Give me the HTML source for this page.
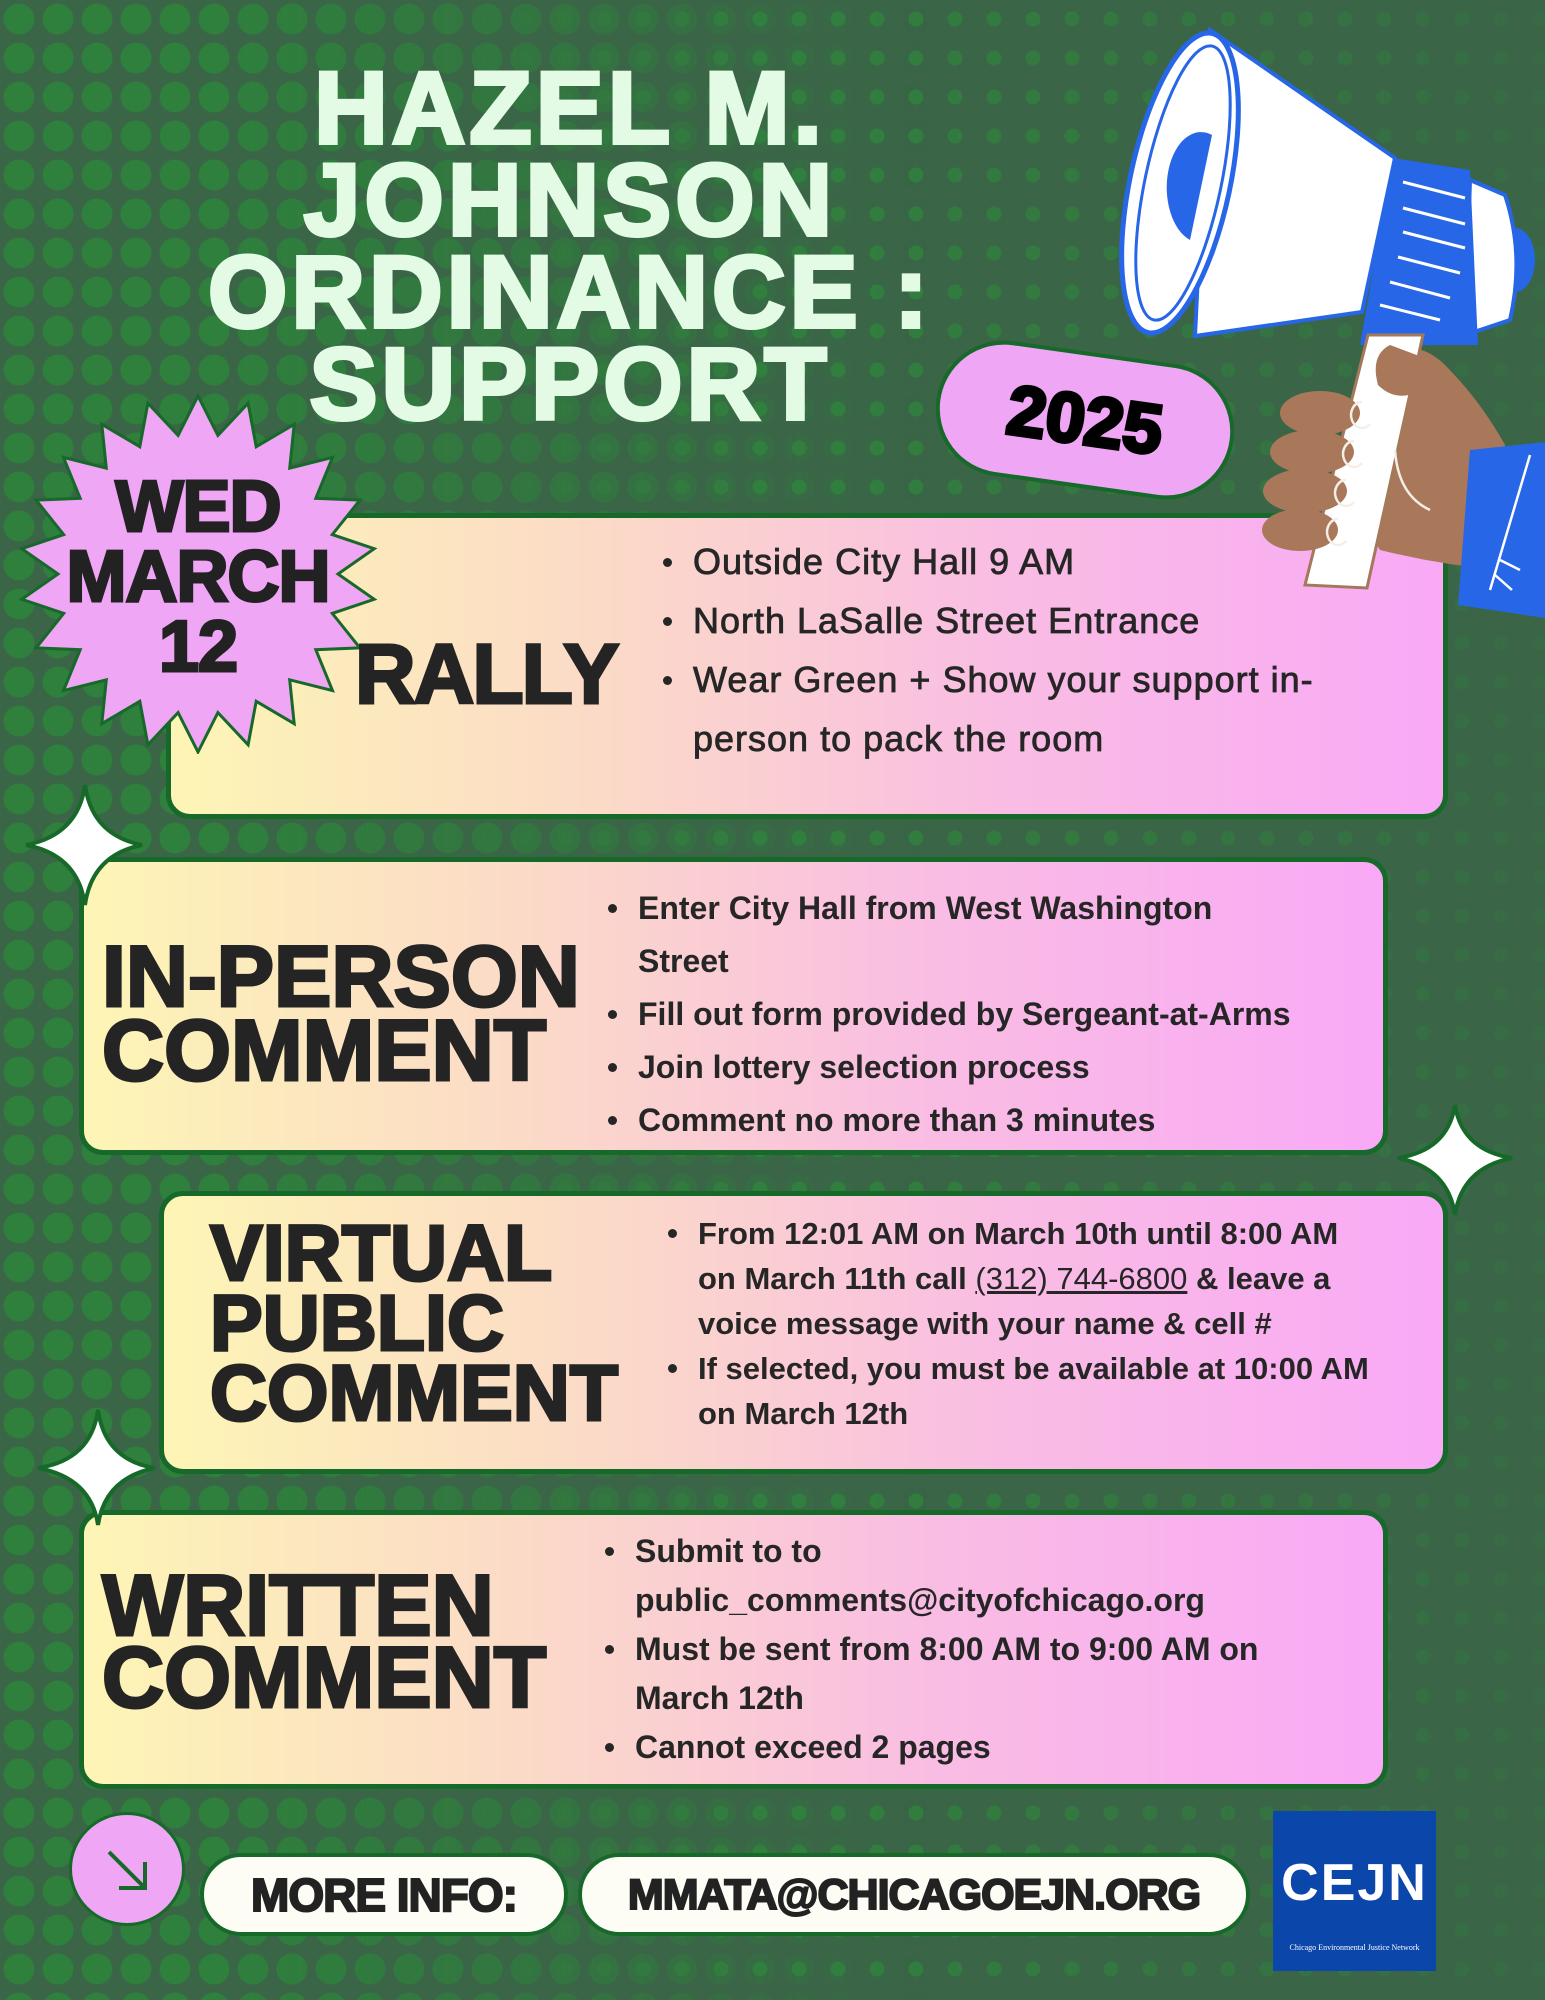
<!DOCTYPE html>
<html><head><meta charset="utf-8"><style>
*{margin:0;padding:0;box-sizing:border-box}
body{width:1545px;height:2000px;position:relative;overflow:hidden;background:#3a6547;font-family:"Liberation Sans",sans-serif}
.dots1{position:absolute;inset:0;background-image:radial-gradient(circle at 19px 19px,#2f7f3d 0 15px,transparent 16px);background-size:39px 39px;-webkit-mask-image:linear-gradient(90deg,#000 0%,#000 15%,rgba(0,0,0,.5) 40%,transparent 60%);mask-image:linear-gradient(90deg,#000 0%,#000 15%,rgba(0,0,0,.5) 40%,transparent 60%)}
.dots2{position:absolute;inset:0;background-image:radial-gradient(circle at 19px 19px,#31803e 0 7px,transparent 8px);background-size:39px 39px;-webkit-mask-image:linear-gradient(90deg,transparent 30%,#000 50%,rgba(0,0,0,.5) 85%,rgba(0,0,0,.2) 100%);mask-image:linear-gradient(90deg,transparent 30%,#000 50%,rgba(0,0,0,.5) 85%,rgba(0,0,0,.2) 100%)}
.abs{position:absolute}
.title{position:absolute;left:0;top:62px;width:1140px;text-align:center;color:#e3fbe5;font-weight:bold;font-size:102px;line-height:92px;letter-spacing:4px;-webkit-text-stroke:4px #e3fbe5}
.box{position:absolute;border:5px solid #17692a;border-radius:24px;background:linear-gradient(90deg,#fdf5b5 0%,#fbd9c8 35%,#f9bde3 65%,#f9a9f6 100%)}
.h{position:absolute;font-weight:bold;color:#242424;-webkit-text-stroke:3px #242424;line-height:1}
ul{position:absolute;list-style:none;color:#262626}
li{position:relative}
li:before{content:"";position:absolute;left:-30px;top:var(--bt);width:9px;height:9px;border-radius:50%;background:#262626}
.pill{position:absolute;background:#fdfcf5;border:4px solid #17692a;border-radius:45px;text-align:center;font-weight:bold;color:#222;-webkit-text-stroke:2px #222}
</style></head><body>
<div class="dots1"></div><div class="dots2"></div>

<div class="title">HAZEL M.<br>JOHNSON<br>ORDINANCE :<br>SUPPORT</div>

<div class="abs" style="left:935px;top:352px;width:300px;height:136px;border-radius:68px;background:#efa6f5;border:4px solid #17692a;transform:rotate(8deg);text-align:center;font-weight:bold;font-size:70px;line-height:128px;color:#000;-webkit-text-stroke:4px #000">2025</div>

<div class="box" style="left:166px;top:513px;width:1282px;height:306px"></div>
<svg class="abs" style="left:18px;top:394px" width="360" height="360"><polygon id="star" fill="#efa6f5" stroke="#17692a" stroke-width="3"/></svg>
<div class="h" style="left:18px;top:472px;width:360px;text-align:center;font-size:72px;line-height:70px;-webkit-text-stroke:3px #222;color:#222;letter-spacing:-1px">WED<br>MARCH<br>12</div>
<div class="h" style="left:355px;top:632px;font-size:84px;letter-spacing:-2px">RALLY</div>
<ul style="left:693px;top:532px;font-size:36px;line-height:59px;letter-spacing:1px;-webkit-text-stroke:0.8px #262626;--bt:26px">
 <li>Outside City Hall 9 AM</li><li>North LaSalle Street Entrance</li><li>Wear Green + Show your support in-<br>person to pack the room</li>
</ul>

<div class="box" style="left:79px;top:857px;width:1309px;height:298px"></div>
<div class="h" style="left:102px;top:940px;font-size:86px;line-height:74px;letter-spacing:0px">IN-PERSON<br>COMMENT</div>
<ul style="left:638px;top:882px;font-size:32px;line-height:53px;font-weight:bold;--bt:22px">
 <li>Enter City Hall from West Washington<br>Street</li><li>Fill out form provided by Sergeant-at-Arms</li><li>Join lottery selection process</li><li>Comment no more than 3 minutes</li>
</ul>

<div class="box" style="left:159px;top:1191px;width:1289px;height:283px"></div>
<div class="h" style="left:210px;top:1218px;font-size:79px;line-height:70px">VIRTUAL<br>PUBLIC<br>COMMENT</div>
<ul style="left:698px;top:1211px;font-size:31px;line-height:45px;font-weight:bold;--bt:18px">
 <li>From 12:01 AM on March 10th until 8:00 AM<br>on March 11th call <u style="font-weight:normal">(312) 744-6800</u> &amp; leave a<br>voice message with your name &amp; cell #</li><li>If selected, you must be available at 10:00 AM<br>on March 12th</li>
</ul>

<div class="box" style="left:79px;top:1510px;width:1309px;height:279px"></div>
<div class="h" style="left:102px;top:1570px;font-size:86px;line-height:72px">WRITTEN<br>COMMENT</div>
<ul style="left:635px;top:1527px;font-size:32px;line-height:49px;font-weight:bold;--bt:20px">
 <li>Submit to to<br>public_comments@cityofchicago.org</li><li>Must be sent from 8:00 AM to 9:00 AM on<br>March 12th</li><li>Cannot exceed 2 pages</li>
</ul>

<svg class="abs" style="left:0;top:0;z-index:5" width="1545" height="2000">
 <g>
  <path d="M1210 30 L1395 158 L1362 312 L1195 336 Z" fill="#fff" stroke="#2766e6" stroke-width="4"/>
  <ellipse cx="1180" cy="183" rx="50" ry="153" transform="rotate(12 1180 183)" fill="#fff" stroke="#2766e6" stroke-width="5"/>
  <ellipse cx="1183" cy="183" rx="38" ry="140" transform="rotate(12 1183 183)" fill="none" stroke="#2766e6" stroke-width="3"/>
  <path d="M1212 135 A34 55 0 1 0 1190 240 Z" fill="#2766e6"/>
  <ellipse cx="1515" cy="260" rx="20" ry="32" fill="#2766e6"/>
  <path d="M1470 180 L1505 195 Q1525 255 1510 320 L1465 335 Z" fill="#fff" stroke="#2766e6" stroke-width="4"/>
  <path d="M1393 158 L1470 170 L1478 345 L1360 345 Z" fill="#2766e6"/>
  <g stroke="#fff" stroke-width="3"><line x1="1403" y1="182" x2="1465" y2="198"/><line x1="1403" y1="208" x2="1465" y2="224"/><line x1="1403" y1="232" x2="1465" y2="248"/><line x1="1398" y1="257" x2="1460" y2="273"/><line x1="1390" y1="282" x2="1450" y2="298"/><line x1="1380" y1="305" x2="1440" y2="320"/></g>
  <path d="M1385 350 Q1420 340 1445 365 Q1480 400 1505 445 L1500 570 Q1440 565 1380 550 L1350 500 Z" fill="#a9785a"/>
  <path d="M1368 335 L1423 335 L1367 588 L1305 585 Z" fill="#fff" stroke="#a3795a" stroke-width="3"/>
  <path d="M1390 345 Q1370 355 1378 385 Q1395 402 1418 392 L1430 360 Z" fill="#a9785a"/>
  <g fill="#a9785a"><ellipse cx="1320" cy="413" rx="40" ry="22"/><ellipse cx="1312" cy="452" rx="42" ry="22"/><ellipse cx="1305" cy="491" rx="42" ry="22"/><ellipse cx="1300" cy="530" rx="38" ry="21"/></g>
  <g fill="none" stroke="#f4efe6" stroke-width="2.5"><path d="M1362 402 a11 13 0 1 0 8 22"/><path d="M1354 441 a11 13 0 1 0 8 22"/><path d="M1346 480 a11 13 0 1 0 8 22"/><path d="M1338 519 a11 13 0 1 0 8 22"/><path d="M1395 450 Q1398 495 1430 510"/></g>
  <path d="M1470 450 L1545 442 L1545 618 L1458 605 Z" fill="#2766e6"/>
  <g stroke="#fff" stroke-width="2.5" fill="none"><path d="M1530 455 L1490 590"/><path d="M1495 575 L1512 590 M1500 560 L1520 570"/></g>
 </g>
 <g fill="#fff" stroke="#17692a" stroke-width="4">
  <path d="M85 785 Q92 835 142 845 Q92 855 85 905 Q78 855 26 845 Q78 835 85 785Z"/>
  <path d="M1455 1105 Q1462 1150 1512 1158 Q1462 1168 1455 1215 Q1448 1168 1398 1158 Q1448 1150 1455 1105Z"/>
  <path d="M98 1410 Q105 1460 155 1468 Q105 1478 98 1525 Q91 1478 38 1468 Q91 1460 98 1410Z"/>
 </g>
</svg>

<div class="abs" style="left:69px;top:1812px;width:116px;height:114px;border-radius:50%;background:#efa6f5;border:3px solid #17692a"></div>
<svg class="abs" style="left:69px;top:1812px" width="116" height="114"><g stroke="#17692a" stroke-width="4" fill="none"><path d="M40 40 L76 76 M76 50 L76 76 L50 76"/></g></svg>
<div class="pill" style="left:200px;top:1853px;width:368px;height:83px;font-size:46px;line-height:76px;letter-spacing:-1px">MORE INFO:</div>
<div class="pill" style="left:578px;top:1853px;width:672px;height:83px;font-size:43px;line-height:76px;letter-spacing:-1px">MMATA@CHICAGOEJN.ORG</div>
<div class="abs" style="left:1273px;top:1811px;width:163px;height:160px;background:#0b46ab;color:#fff;text-align:center">
 <div style="font-size:52px;font-weight:bold;margin-top:42px;letter-spacing:2px">CEJN</div>
 <div style="font-size:8px;margin-top:30px;font-family:'Liberation Serif',serif">Chicago Environmental Justice Network</div>
</div>
<script>
var p=[],n=22,cx=180,cy=180;
for(var i=0;i<n*2;i++){var r=i%2?140:178,a=Math.PI*i/n-Math.PI/2;p.push((cx+r*Math.cos(a)).toFixed(1)+','+(cy+r*Math.sin(a)).toFixed(1));}
document.getElementById('star').setAttribute('points',p.join(' '));
</script>
</body></html>
